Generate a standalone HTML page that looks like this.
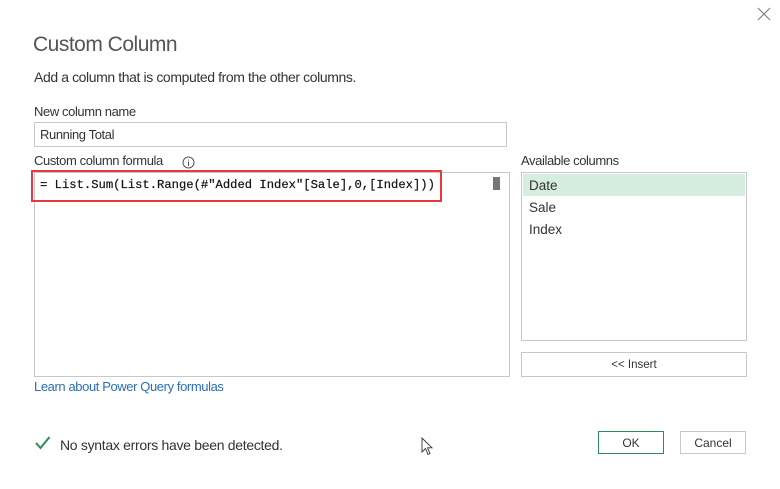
<!DOCTYPE html>
<html><head><style>
body{margin:0;width:780px;height:489px;background:#fff;position:relative;overflow:hidden;font-family:"Liberation Sans",sans-serif;color:#333}
.a{position:absolute;white-space:nowrap}
</style></head><body>
<svg class="a" style="left:757px;top:7px" width="14" height="14"><path d="M1 1L13 13M13 1L1 13" stroke="#777" stroke-width="1"/></svg>
<div class="a" style="left:33px;top:33px;font-size:21px;color:#555;letter-spacing:-0.5px">Custom Column</div>
<div class="a" style="left:34px;top:69px;font-size:14px;color:#333;letter-spacing:-0.4px">Add a column that is computed from the other columns.</div>
<div class="a" style="left:34px;top:104px;font-size:13px;letter-spacing:-0.4px">New column name</div>
<div class="a" style="left:34px;top:122px;width:471px;height:23px;border:1px solid #c8c8c8"></div>
<div class="a" style="left:40px;top:127px;font-size:13px;letter-spacing:-0.4px">Running Total</div>
<div class="a" style="left:34px;top:153px;font-size:13px;letter-spacing:-0.4px">Custom column formula</div>
<svg class="a" style="left:182px;top:156px" width="13" height="13"><circle cx="6.5" cy="6.5" r="5.5" fill="none" stroke="#555"/><path d="M6.5 5.5V10M6.5 3.5V4.5" stroke="#555"/></svg>
<div class="a" style="left:34px;top:172px;width:474px;height:203px;border:1px solid #c8c8c8"></div>
<div class="a" style="left:493px;top:177px;width:7px;height:13px;background:#777"></div>
<div class="a" style="left:31px;top:170px;width:407px;height:28px;border:2px solid #e8383d"></div>
<div class="a" style="left:40px;top:178px;font-family:'Liberation Mono',monospace;font-size:12.2px;color:#111;-webkit-text-stroke:0.2px #111">= List.Sum(List.Range(#"Added Index"[Sale],0,[Index]))</div>
<div class="a" style="left:521px;top:153px;font-size:13px;letter-spacing:-0.4px">Available columns</div>
<div class="a" style="left:521px;top:172px;width:224px;height:167px;border:1px solid #c8c8c8"></div>
<div class="a" style="left:523px;top:174px;width:222px;height:22px;background:#d5eee0"></div>
<div class="a" style="left:529px;top:178px;font-size:13.5px">Date</div>
<div class="a" style="left:529px;top:200px;font-size:13.5px">Sale</div>
<div class="a" style="left:529px;top:222px;font-size:13.5px">Index</div>
<div class="a" style="left:521px;top:352px;width:224px;height:23px;border:1px solid #c8c8c8;font-size:11.5px;text-align:center;line-height:25px">&lt;&lt; Insert</div>
<div class="a" style="left:34px;top:379px;font-size:13px;color:#2a6ebb;letter-spacing:-0.4px">Learn about Power Query formulas</div>
<svg class="a" style="left:35px;top:436px" width="16" height="14"><path d="M1 7L5.5 12L14.5 1" fill="none" stroke="#2e8a57" stroke-width="2"/></svg>
<div class="a" style="left:60px;top:437px;font-size:14px;letter-spacing:-0.3px">No syntax errors have been detected.</div>
<svg class="a" style="left:421px;top:437px" width="14" height="20"><path d="M1 1V15L4.5 11.5L7 17.5L9 16.5L6.5 10.8H11Z" fill="#fff" stroke="#333" stroke-width="0.9"/></svg>
<div class="a" style="left:598px;top:431px;width:64px;height:21px;border:1px solid #2e8a57;font-size:12px;text-align:center;line-height:23px">OK</div>
<div class="a" style="left:680px;top:431px;width:64px;height:21px;border:1px solid #c8c8c8;font-size:12px;text-align:center;line-height:23px">Cancel</div>
</body></html>
